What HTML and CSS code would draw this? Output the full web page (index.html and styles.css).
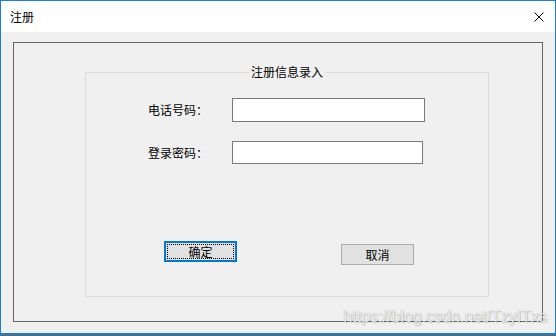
FILE: index.html
```html
<!DOCTYPE html>
<html lang="zh">
<head>
<meta charset="utf-8">
<title>注册</title>
<link rel="stylesheet" href="styles.css">
</head>
<body>
<div class="window">
  <div class="titlebar">
    <span class="title">注册</span>
    <svg class="close" width="10" height="10" viewBox="0 0 10 10"><path d="M0.5 0.5 L9.5 9.5 M9.5 0.5 L0.5 9.5" stroke="#000" stroke-width="1" fill="none"/></svg>
  </div>
  <div class="client">
    <div class="panel">
      <div class="group">
        <span class="legend">注册信息录入</span>
        <div class="row">
          <span class="label">电话号码：</span>
          <input class="field f1" type="text">
        </div>
        <div class="row row2">
          <span class="label">登录密码：</span>
          <input class="field f2" type="password">
        </div>
        <div class="buttons">
          <button class="btn primary"><span class="focus">确定</span></button>
          <button class="btn cancel">取消</button>
        </div>
      </div>
    </div>
  </div>
  <span class="watermark">https://blog.csdn.net/TzyITxs</span>
</div>
</body>
</html>
```
FILE: styles.css
```css
html, body {
  margin: 0;
  padding: 0;
}
body {
  width: 556px;
  height: 336px;
  background: #41708e;
  font-family: "Noto Sans CJK SC", "Noto Sans", sans-serif;
  font-size: 12px;
  color: #000;
  overflow: hidden;
}
.window {
  position: relative;
  box-sizing: border-box;
  width: 556px;
  height: 334px;
  border: 1px solid #1a7fd4;
  background: #f0f0f0;
  display: flex;
  flex-direction: column;
}
.titlebar {
  height: 31px;
  flex: none;
  background: #fff;
  display: flex;
  align-items: center;
  justify-content: space-between;
  padding: 0 11px 0 9px;
}
.title {
  font-size: 12px;
  line-height: 14px;
  margin-top: 1px;
}
.close {
  display: block;
  margin-top: 1px;
}
.client {
  flex: 1;
  display: flex;
  padding: 10px 12px 11px 12px;
}
.panel {
  flex: 1;
  border: 1px solid #646464;
  display: flex;
  align-items: flex-start;
}
.group {
  position: relative;
  box-sizing: border-box;
  width: 404px;
  height: 225px;
  margin: 29px 0 0 71px;
  border: 1px solid #dcdcdc;
  padding: 25px 0 0 62px;
  display: flex;
  flex-direction: column;
  align-items: flex-start;
}
.legend {
  position: absolute;
  top: -8px;
  left: 50%;
  transform: translateX(-50%);
  background: #f0f0f0;
  padding: 0 2px;
  line-height: 14px;
  white-space: nowrap;
}
.row {
  display: flex;
  align-items: center;
}
.row2 {
  margin-top: 19px;
}
.label {
  width: 84px;
  line-height: 14px;
}
.field {
  box-sizing: border-box;
  margin: 0;
  padding: 0 3px;
  border: 1px solid #7a7a7a;
  background: #fff;
  outline: none;
  font: inherit;
}
.f1 {
  width: 193px;
  height: 24px;
}
.f2 {
  width: 191px;
  height: 23px;
}
.buttons {
  margin-top: 77px;
  display: flex;
  align-items: flex-start;
}
.btn {
  box-sizing: border-box;
  width: 73px;
  height: 21px;
  margin: 0;
  padding: 0;
  background: #e1e1e1;
  border: 1px solid #adadad;
  font: inherit;
  font-size: 12px;
  line-height: 14px;
  color: #000;
  display: flex;
  align-items: center;
  justify-content: center;
}
.primary {
  margin-left: 16px;
  border: 1px solid #0078d7;
  box-shadow: inset 0 0 0 1px #0078d7;
  padding: 2px;
}
.focus {
  flex: 1;
  align-self: stretch;
  border: 1px dotted #000;
  display: flex;
  align-items: center;
  justify-content: center;
}
.cancel {
  margin-left: 104px;
  margin-top: 3px;
}
.watermark {
  position: absolute;
  right: 8px;
  bottom: 7px;
  font-family: "Liberation Sans", Arial, sans-serif;
  font-size: 16px;
  color: rgba(255, 255, 255, 0.85);
  text-shadow: 0 0 1px rgba(0, 0, 0, 0.35), 1px 1px 1px rgba(0, 0, 0, 0.15);
  white-space: nowrap;
}
```
